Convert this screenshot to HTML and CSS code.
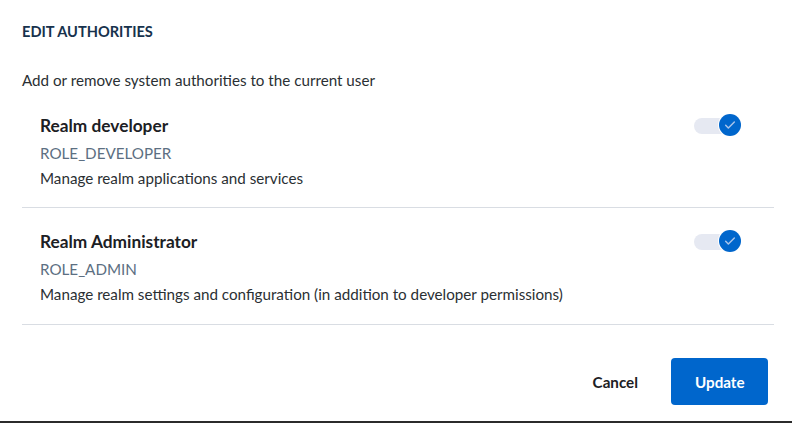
FILE: index.html
```html
<!DOCTYPE html>
<html>
<head>
<meta charset="utf-8">
<link rel="stylesheet" href="styles.css">
</head>
<body>
<div class="modal">
  <h2 class="title">EDIT AUTHORITIES</h2>
  <p class="subtitle">Add or remove system authorities to the current user</p>
  <ul class="list">
    <li class="item">
      <div class="info">
        <div class="name">Realm developer</div>
        <div class="role">ROLE_DEVELOPER</div>
        <div class="desc">Manage realm applications and services</div>
      </div>
      <span class="toggle"><span class="track"></span><span class="knob"><svg viewBox="0 0 24 24" width="16" height="16"><path d="M5.5 12.5l4 4L18.5 7.5" fill="none" stroke="#a9c4ea" stroke-width="2.2" stroke-linecap="round" stroke-linejoin="round"/></svg></span></span>
    </li>
    <li class="item">
      <div class="info">
        <div class="name">Realm Administrator</div>
        <div class="role">ROLE_ADMIN</div>
        <div class="desc">Manage realm settings and configuration (in addition to developer permissions)</div>
      </div>
      <span class="toggle"><span class="track"></span><span class="knob"><svg viewBox="0 0 24 24" width="16" height="16"><path d="M5.5 12.5l4 4L18.5 7.5" fill="none" stroke="#a9c4ea" stroke-width="2.2" stroke-linecap="round" stroke-linejoin="round"/></svg></span></span>
    </li>
  </ul>
  <div class="footer">
    <button class="btn btn-cancel">Cancel</button>
    <button class="btn btn-primary">Update</button>
  </div>
</div>
</body>
</html>
```
FILE: styles.css
```css
html, body {
  margin: 0;
  padding: 0;
  background: #fff;
}
body {
  font-family: "Lato", "Noto Sans", sans-serif;
  color: #1c2024;
}
.modal {
  width: 792px;
  height: 423px;
  box-sizing: border-box;
  padding: 20px 0 0 22px;
  border-bottom: 2px solid #2b2b2b;
  display: flex;
  flex-direction: column;
}
.title {
  margin: 0;
  font-size: 14.6px;
  line-height: 24px;
  font-weight: 700;
  color: #17324d;
}
.subtitle {
  margin: 24px 0 0;
  font-size: 15.2px;
  line-height: 24px;
  color: #2a2f33;
}
.list {
  list-style: none;
  margin: 0 18px 0 0;
  padding: 0;
}
.item {
  display: flex;
  justify-content: space-between;
  align-items: flex-start;
  padding: 22px 33px 17px 18px;
  border-bottom: 1px solid #d9dde3;
}
.item + .item {
  padding-bottom: 18px;
}
.name {
  font-size: 17.3px;
  line-height: 24px;
  font-weight: 700;
  color: #1c2024;
}
.role {
  margin-top: 4px;
  font-size: 15.2px;
  line-height: 22px;
  color: #5c6f82;
}
.desc {
  margin-top: 2px;
  font-size: 15.2px;
  line-height: 24px;
  color: #2a2f33;
}
.toggle {
  position: relative;
  width: 47px;
  height: 24px;
  flex: none;
}
.track {
  position: absolute;
  left: 0;
  top: 4px;
  width: 36px;
  height: 16px;
  border-radius: 8px;
  background: #e6e9f2;
}
.knob {
  position: absolute;
  right: 0;
  top: 0;
  width: 22px;
  height: 22px;
  border-radius: 50%;
  background: #0066cc;
  box-shadow: 0 0 0 1px #fff;
  display: flex;
  align-items: center;
  justify-content: center;
}
.footer {
  display: flex;
  justify-content: flex-end;
  gap: 9px;
  margin-top: 33px;
  padding-right: 24px;
}
.btn {
  font-family: inherit;
  font-size: 15.2px;
  font-weight: 700;
  height: 47px;
  padding: 0 24px;
  border: 0;
  border-radius: 4px;
  cursor: pointer;
}
.btn-cancel {
  background: transparent;
  color: #1c2024;
}
.btn-primary {
  background: #0066cc;
  color: #fff;
  width: 97px;
}
```
